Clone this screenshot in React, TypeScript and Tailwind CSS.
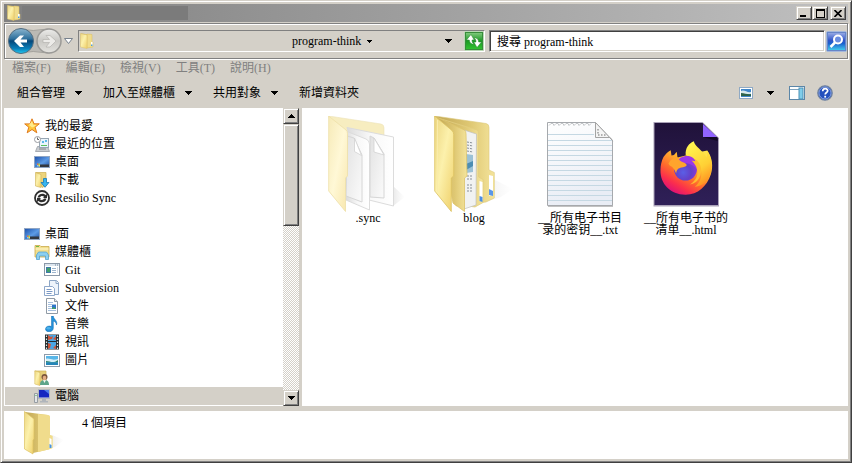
import type { ReactNode } from "react";

const raised =
  "border border-t-[#d4d0c8] border-l-[#d4d0c8] border-r-[#404040] border-b-[#404040] shadow-[inset_1px_1px_0_#fff,inset_-1px_-1px_0_#808080]";

function Gradients() {
  return (
    <svg width="0" height="0" className="absolute" aria-hidden="true">
      <defs>
        <linearGradient id="flap" x1="0" y1="0" x2="1" y2="1">
          <stop offset="0" stopColor="#ecd680" />
          <stop offset=".45" stopColor="#fcf1ac" />
          <stop offset="1" stopColor="#efcf68" />
        </linearGradient>
        <linearGradient id="back" x1="0" y1="0" x2="1" y2="0">
          <stop offset="0" stopColor="#c0a654" />
          <stop offset=".6" stopColor="#dfc873" />
          <stop offset="1" stopColor="#f4e49c" />
        </linearGradient>
        <linearGradient id="flapPale" x1="0" y1="0" x2="1" y2="1">
          <stop offset="0" stopColor="#f6eab8" />
          <stop offset=".5" stopColor="#fff8d6" />
          <stop offset="1" stopColor="#f8e6ab" />
        </linearGradient>
        <linearGradient id="sheet" x1="0" y1="0" x2="1" y2="0">
          <stop offset="0" stopColor="#dcdcdc" />
          <stop offset=".5" stopColor="#f8f8f8" />
          <stop offset="1" stopColor="#ffffff" />
        </linearGradient>
        <linearGradient id="innerSheet" x1="0" y1="0" x2="1" y2="1">
          <stop offset="0" stopColor="#e2e2e2" />
          <stop offset="1" stopColor="#fbfbfb" />
        </linearGradient>
        <linearGradient id="shade" x1="0" y1="0" x2="1" y2="0">
          <stop offset="0" stopColor="#888" stopOpacity=".45" />
          <stop offset="1" stopColor="#aaa" stopOpacity="0" />
        </linearGradient>
        <linearGradient id="sky" x1="0" y1="0" x2="1" y2="1">
          <stop offset="0" stopColor="#1b4ea8" />
          <stop offset=".55" stopColor="#5d9be6" />
          <stop offset="1" stopColor="#1d4b9a" />
        </linearGradient>
        <linearGradient id="orb" x1="0" y1="0" x2="0" y2="1">
          <stop offset="0" stopColor="#8ab5cf" />
          <stop offset=".42" stopColor="#2d6f9c" />
          <stop offset=".5" stopColor="#06477a" />
          <stop offset=".8" stopColor="#0a7fb9" />
          <stop offset="1" stopColor="#20c8f0" />
        </linearGradient>
        <linearGradient id="greyOrb" x1="0" y1="0" x2="0" y2="1">
          <stop offset="0" stopColor="#ececea" />
          <stop offset=".5" stopColor="#c9c8c4" />
          <stop offset="1" stopColor="#e4e3df" />
        </linearGradient>
        <linearGradient id="notepad" x1="0" y1="0" x2=".3" y2="1">
          <stop offset="0" stopColor="#ffffff" />
          <stop offset="1" stopColor="#e9edf5" />
        </linearGradient>
        <linearGradient id="night" x1="0" y1="0" x2="0" y2="1">
          <stop offset="0" stopColor="#20123a" />
          <stop offset="1" stopColor="#2f2058" />
        </linearGradient>
        <linearGradient id="fire" x1=".85" y1=".1" x2=".25" y2=".95">
          <stop offset="0" stopColor="#ffe14a" />
          <stop offset=".3" stopColor="#ffb52e" />
          <stop offset=".6" stopColor="#ff6a2c" />
          <stop offset=".82" stopColor="#fb2f4c" />
          <stop offset="1" stopColor="#e01274" />
        </linearGradient>
        <linearGradient id="tail" x1=".3" y1="0" x2=".7" y2="1">
          <stop offset="0" stopColor="#fff650" />
          <stop offset=".6" stopColor="#ffd035" />
          <stop offset="1" stopColor="#ff8a1f" />
        </linearGradient>
        <radialGradient id="globe" cx=".4" cy=".65" r=".7">
          <stop offset="0" stopColor="#5a5fe6" />
          <stop offset=".5" stopColor="#6440c8" />
          <stop offset="1" stopColor="#9a37dc" />
        </radialGradient>
        <linearGradient id="go" x1="0" y1="0" x2="0" y2="1">
          <stop offset="0" stopColor="#8fd08b" />
          <stop offset=".5" stopColor="#1c9a25" />
          <stop offset="1" stopColor="#35c832" />
        </linearGradient>
        <linearGradient id="find" x1="0" y1="0" x2="0" y2="1">
          <stop offset="0" stopColor="#a9b9ea" />
          <stop offset=".45" stopColor="#2f55c8" />
          <stop offset=".6" stopColor="#1b62cf" />
          <stop offset="1" stopColor="#4be0f2" />
        </linearGradient>
      </defs>
    </svg>
  );
}

function Icon({ size = 16, children }: { size?: number; children: ReactNode }) {
  return (
    <svg width={size} height={size} viewBox={`0 0 ${size} ${size}`} className="shrink-0" aria-hidden="true">
      {children}
    </svg>
  );
}

function FolderIcon() {
  return (
    <Icon>
      <path d="M2 .5L12 1.500v13L7 15z" fill="url(#back)" />
      <path d="M8 1l5 .5v7l1 1v4.500l-6 1z" fill="#f0dc8c" stroke="#d8bd62" strokeWidth=".5" />
      <path d="M1.500 .5L8 2V15.500L1.500 14z" fill="url(#flap)" stroke="#dcc068" strokeWidth=".5" />
      <path d="M12 9h1.500v4H12z" fill="#fff" />
      <path d="M12 11.500h1.500V13H12z" fill="#4a9be0" />
    </Icon>
  );
}

function DesktopIcon() {
  return (
    <Icon>
      <rect x=".5" y="2.500" width="15" height="11" fill="url(#sky)" stroke="#8fa5c4" />
      <path d="M6 10.500h9V13H6z" fill="#33373f" />
      <path d="M1 11h5v2H1z" fill="#3a7fd0" />
      <path d="M3 9.500h1.500V11H3z" fill="#f2693b" />
      <path d="M4.500 9.500H6V11H4.500z" fill="#a5d845" />
      <path d="M3 11h1.500v1.500H3z" fill="#7cc8f5" />
      <path d="M4.500 11H6v1.500H4.500z" fill="#ffdf4d" />
    </Icon>
  );
}

function StarIcon() {
  return (
    <Icon>
      <path d="M8 .8l2 5h5.300l-4.200 3.400 1.700 5.600L8 11.500l-4.800 3.300 1.600-5.600L.7 5.900H6z" fill="#ffc83a" stroke="#e07a1e" strokeLinejoin="round" />
      <path d="M8 3l1.200 3.800 3.300.2L9.600 9 8 9.600 5 7z" fill="#ffeb8c" />
    </Icon>
  );
}

function RecentIcon() {
  return (
    <Icon>
      <path d="M3.500 10.500h10l2 5h-14z" fill="#c9cdd2" stroke="#989da3" strokeWidth=".8" />
      <rect x="5.500" y="2.500" width="9" height="9" fill="#eaf5fc" stroke="#98a6b3" />
      <path d="M8 5h2v2H8zM11 4h2v2h-2z" fill="#5cb9e8" />
      <path d="M7 9h6v1H7z" fill="#5ac15f" />
      <circle cx="3.500" cy="3.500" r="3" fill="#fff" stroke="#9a9da2" />
      <path d="M3.500 1.500v2h1.500" fill="none" stroke="#666" />
      <path d="M5 13h7" stroke="#888" />
    </Icon>
  );
}

function DownloadIcon() {
  return (
    <Icon>
      <path d="M2 .5h10v13l-4 2z" fill="#edd47c" stroke="#cdaf51" strokeWidth=".7" />
      <path d="M1.500 .5L7 2.500V15.500L1.500 14z" fill="url(#flap)" stroke="#cfb257" strokeWidth=".6" />
      <path d="M9.500 6.500h3v4h2.500l-4 4.800-4-4.800h2.500z" fill="#36b5f0" stroke="#1678b8" strokeWidth=".8" />
    </Icon>
  );
}

function SyncIcon() {
  return (
    <Icon>
      <circle cx="8" cy="8" r="7" fill="#fff" stroke="#2e2e2e" strokeWidth="1.800" />
      <path d="M3.500 7.500C4 3.500 9.500 2.500 11.500 5L13 4v4H9l1.200-1.300C8.500 5.500 6.500 6 6 7.500zM12.500 8.500C12 12.500 6.500 13.500 4.500 11L3 12V8h4L5.800 9.300C7.500 10.500 9.500 10 10 8.500z" fill="#2e2e2e" />
    </Icon>
  );
}

function LibraryIcon() {
  return (
    <Icon>
      <path d="M1 3V1.500h5l1 1h8V13H1z" fill="#f3df8d" stroke="#c9a94b" strokeWidth=".8" />
      <path d="M2 2h3v1H2z" fill="#6dbb45" />
      <path d="M1.500 5h13" stroke="#fff8d2" />
      <path d="M2.500 15.500V11l2-3h8l2 3v4.500h-3V12h-6v3.500z" fill="#8bcff0" stroke="#57a3cf" strokeWidth=".8" />
    </Icon>
  );
}

function GitIcon() {
  return (
    <Icon>
      <rect x=".5" y="1.500" width="15" height="12" fill="#fff" stroke="#8b98a8" />
      <path d="M1 2h14v2H1z" fill="#dce5ee" />
      <path d="M11 2.500h1v1h-1zM13 2.500h1v1h-1z" fill="#6f8498" />
      <rect x="2" y="5" width="5" height="6" fill="#3f7aa8" />
      <path d="M3 6h3v4H3z" fill="#41a06a" />
      <path d="M8 6.500h4M8 8.500h4M8 10.500h4" stroke="#9eb5ce" />
      <path d="M13 5h1v6h-1z" fill="#d3dbe5" />
    </Icon>
  );
}

function SubversionIcon() {
  return (
    <Icon>
      <path d="M5.500.5h7l2 2v12h-9z" fill="#eef4fb" stroke="#8ca6c6" />
      <path d="M12 1v2.500h2" fill="none" stroke="#8ca6c6" />
      <path d="M.5 6.500h8l2 2v7H.5z" fill="#fff" stroke="#8fa8cb" />
      <path d="M2.500 9.500h5M2.500 11.500h6M2.500 13.500h5" stroke="#7a99c6" />
    </Icon>
  );
}

function DocumentIcon() {
  return (
    <Icon>
      <path d="M2.500.5h8l3 3v12h-11z" fill="#fff" stroke="#909aa5" />
      <path d="M10.500.5v3h3" fill="#e3e8ed" stroke="#909aa5" />
      <path d="M4 4.500h5M4 6.500h8M4 8.500h4M4 10.500h4M4 12.500h8" stroke="#a5bfdd" />
      <path d="M8 7h4v4H8z" fill="#2d73cb" />
      <path d="M8 10l2-1 2 2H8z" fill="#43a163" />
    </Icon>
  );
}

function MusicIcon() {
  return (
    <Icon>
      <path d="M7.500 0h1.800c.2 3.500 4.700 4.500 3.200 9-.3-2.500-1.500-3.500-3.200-3.800V12c0 5-8 4.500-7.800 1 .2-2.800 3.500-3.500 6-2.500z" fill="#2493dc" stroke="#0e69af" strokeWidth=".5" />
      <ellipse cx="4.500" cy="12.300" rx="2" ry="1.200" fill="#4fb2ea" />
    </Icon>
  );
}

function VideoIcon() {
  return (
    <Icon>
      <path d="M1 .5h14v15H1z" fill="#262d30" />
      <path d="M4 1h8v6H4zM4 8h8v7H4z" fill="#4aa6e4" />
      <path d="M4 1l3 2 2-1-1 3-4 1zM12 2v4L9 5zM4 9l3 1-1 4-2 1zM12 11v4l-3-1z" fill="#cf5337" />
      <path d="M2.500 1.500v14M13.500 1.500v14" stroke="#e2e9e7" strokeWidth="1.200" strokeDasharray="1.500 1.500" />
    </Icon>
  );
}

function PictureIcon() {
  return (
    <Icon>
      <rect x=".5" y="2.500" width="15" height="12" fill="#fff" stroke="#8e9cab" />
      <path d="M2 4h12v9H2z" fill="#58b6e8" />
      <path d="M2 7c3-1.500 5 2 12 0v3H2z" fill="#d5eff8" />
      <path d="M2 9c4 0 7 3 12-1v2.500H2z" fill="#2e8069" />
      <path d="M2 10.500h12V13H2z" fill="#2585b8" />
    </Icon>
  );
}

function UserIcon() {
  return (
    <Icon>
      <path d="M1 1h11v13H7z" fill="#e6ce7a" stroke="#cfb257" strokeWidth=".7" />
      <path d="M.8 .8L6 2.500V15.500L.8 14z" fill="url(#flap)" stroke="#d5b95e" strokeWidth=".6" />
      <path d="M6 15c0-4 2-5 4.500-5s4.500 1 4.500 5z" fill="#5da58a" />
      <path d="M9 10h3l-1.500 3z" fill="#f4f5f0" />
      <circle cx="10.500" cy="7" r="3" fill="#7b553c" />
      <ellipse cx="10.500" cy="8" rx="1.800" ry="2.200" fill="#e2ad83" />
    </Icon>
  );
}

function ComputerIcon() {
  return (
    <Icon>
      <rect x="4.500" y="1.500" width="11" height="9" fill="#dde1e5" stroke="#b3b8be" />
      <path d="M5 2h10v7.500H5z" fill="#1627c0" />
      <path d="M10 2h5v4z" fill="#4f7be8" />
      <path d="M8 11h4v2h2v1.500H6V13h2z" fill="#b0b5bb" />
      <path d="M.5 5.500h3v9h-3z" fill="#e2e5e8" stroke="#979da3" />
      <path d="M1.500 7h1v1h-1z" fill="#37b54c" />
    </Icon>
  );
}

const tree: { label: string; icon: () => ReactNode; pad: string; selected?: boolean; gap?: boolean }[] = [
  { label: "我的最愛", icon: StarIcon, pad: "pl-[19px]" },
  { label: "最近的位置", icon: RecentIcon, pad: "pl-[29px]" },
  { label: "桌面", icon: DesktopIcon, pad: "pl-[29px]" },
  { label: "下載", icon: DownloadIcon, pad: "pl-[29px]" },
  { label: "Resilio Sync", icon: SyncIcon, pad: "pl-[29px]" },
  { label: "桌面", icon: DesktopIcon, pad: "pl-[19px]", gap: true },
  { label: "媒體櫃", icon: LibraryIcon, pad: "pl-[29px]" },
  { label: "Git", icon: GitIcon, pad: "pl-[39px]" },
  { label: "Subversion", icon: SubversionIcon, pad: "pl-[39px]" },
  { label: "文件", icon: DocumentIcon, pad: "pl-[39px]" },
  { label: "音樂", icon: MusicIcon, pad: "pl-[39px]" },
  { label: "視訊", icon: VideoIcon, pad: "pl-[39px]" },
  { label: "圖片", icon: PictureIcon, pad: "pl-[39px]" },
  { label: "", icon: UserIcon, pad: "pl-[29px]" },
  { label: "電腦", icon: ComputerIcon, pad: "pl-[29px]", selected: true },
];

function SyncFolder() {
  return (
    <Icon size={96}>
      <path d="M73 70l12 11-12 9z" fill="url(#shade)" opacity=".4" />
      <path d="M8.700 0L61 8q3 .5 3 4v60L27 80z" fill="#f7edc0" stroke="#ece2b8" strokeWidth=".6" />
      <path d="M27 11.500L73.500 21v69L49 84z" fill="url(#sheet)" stroke="#dcdcdc" />
      <path d="M50 20l4 2 10 16v44l-14-1z" fill="url(#innerSheet)" stroke="#d6d6d6" />
      <path d="M54 22v14l10 3z" fill="#fff" stroke="#d2d2d2" strokeWidth=".8" />
      <path d="M27 15.500L46 23q3.500 1.500 3.500 5v66L26 84z" fill="url(#sheet)" stroke="#dcdcdc" />
      <path d="M27 20l7 2 8 17v47l-16-6z" fill="url(#innerSheet)" stroke="#d6d6d6" />
      <path d="M34.500 22v13.500l7 4z" fill="#fff" stroke="#d2d2d2" strokeWidth=".8" />
      <path d="M8.700 0L26 14q1.500 1 1.500 3.500V60l-2 2v33.500L8.700 75z" fill="url(#flapPale)" stroke="#eee0a8" strokeWidth=".8" />
    </Icon>
  );
}

function BlogFolder() {
  return (
    <Icon size={96}>
      <path d="M67 63l20 10-12 8-16 5z" fill="url(#shade)" opacity=".3" />
      <path d="M8.700 0L60 7.500q3 .5 3 4V54l5.300 2.500V82L60 86 30 90z" fill="url(#back)" stroke="#dcc878" strokeWidth=".6" />
      <path d="M63 59l4 1v19l-4 1z" fill="#fff" />
      <path d="M63 73l4 2v5l-4-1z" fill="#5a97e8" />
      <path d="M12 2L51 14q1.500 1 1.500 4v43l4.500 2.500v23L49 91 28 88z" fill="url(#back)" stroke="#e2ce80" strokeWidth=".8" />
      <path d="M53.500 65l3 1v18l-3 1z" fill="#fff" />
      <path d="M53.500 80l3 1v5l-3-1z" fill="#4b8de3" />
      <path d="M38 14l12.500 4L50 89l-12 4z" fill="#f1f2f2" stroke="#bfc0c0" strokeWidth=".7" />
      <path d="M41 26l6 1M41 29l6 1M41 32l6 1M41 35l6 1M41 60h6M41 63h6M41 69h6M41 72h6M41 75h6" stroke="#888f96" strokeDasharray="2 1" />
      <path d="M40 38l7 1v17l-7 1z" fill="#9bc1d6" />
      <path d="M40 48l7-3v5l-7 4z" fill="#4c8db3" />
      <path d="M10 1L38.500 14q1.500 1 1.500 4l1 42-2.500 2v33.500L27 87z" fill="url(#back)" stroke="#ddc46b" strokeWidth=".8" />
      <path d="M8.700 0L26 14.500q1.700 1.500 1.700 4V60l-2.400 2v33.500L8.700 75z" fill="url(#flap)" stroke="#dcc262" strokeWidth=".8" />
      <path d="M11.500 4v72" stroke="#f9ebaa" />
    </Icon>
  );
}

function TextFile() {
  return (
    <Icon size={96}>
      <path d="M16 7h48.500L81 25.500V91H16z" fill="#999" opacity=".6" />
      <path d="M15.500 6.500h48L80.500 24.500v65h-65z" fill="url(#notepad)" stroke="#a6a9ad" />
      <path d="M17 9.500l2-2h2l1 2 2-2h2l1 2 2-2h2l1 2 2-2h2l1 2 2-2h2l1 2 2-2h2l1 2 2-2h2l1 2 2-2h2l1 2 2-2" fill="none" stroke="#c2c5c8" />
      <path d="M16 18.500h46M16 24.500h64M16 29.500h64M16 34.500h64M16 39.500h64M16 44.500h64M16 49.500h64M16 54.500h64M16 59.500h64M16 64.500h64M16 69.500h64M16 74.500h64M16 79.500h64M16 84.500h64" stroke="#c5d8e3" />
      <path d="M63.500 6.500v15h14.500l2.500 3z" fill="#f4f4f4" stroke="#a3a3a3" />
      <path d="M66 13v6h8" fill="none" stroke="#999" strokeWidth="1.500" strokeDasharray="1.500 1.500" />
    </Icon>
  );
}

function FirefoxFile() {
  return (
    <Icon size={96}>
      <path d="M15.500 6h49L81 22v68.500H15.500z" fill="#aaa2b8" />
      <path d="M16.500 7h48L80 22.500V89H16.500z" fill="url(#night)" />
      <path d="M65 8v13h14z" fill="#9164ff" />
      <path d="M65 21h14.500v4z" fill="#120a25" />
      <path d="M25.500 41c2-3 4.500-5 7.200-6.700l.8 5.200 2.500-.5 2.700-3.200.8 5.700 20-5 9.800-2c5 7 6.200 16 3.500 24-4 12-13 20-25 20.200C33 79 22 68 22.500 54c0-5 1-9 3-13z" fill="url(#fire)" />
      <path d="M56 25.300c0 3 4 6 8 10.200 2 2 3.500 4 4.500 6 .8-2 1-4 .8-6.800 5 8 6 17 2 26-3.500 7-9 9.500-14.500 10 5-4 7-9 6.500-15-.5-7-6-14-15.600-16.400C47 32 51 27 56 25.300z" fill="url(#tail)" />
      <circle cx="47.500" cy="53" r="11.500" fill="url(#globe)" />
      <path d="M38.500 46.500c2.500-5 7-7 12-6.500 4 .5 6 3 7.500 5.500l-4-1c4 4 5 7 5 9-4-6-10-7-20.500-7z" fill="#9c37e8" />
      <path d="M57 43c7 4 8.500 15 2 22-2 2-4.500 3-7 3.500 6-4 8.500-9 7-15-1-4-2.500-6-5.500-9l4 1z" fill="#ffbd30" />
      <path d="M30.500 47.500c2-4 5-6 9-6.200 1.500 2.800 3 4.200 5.500 5 2 .8 3.500 1.400 3.700 3-.8 1.700-3 1.700-5.200 2.200-3 .6-5 2-5.300 6-1.200-2.500-2-4.500-4-6.500-1.500-1-3-1.500-3.700-3.500z" fill="#ffa42c" />
    </Icon>
  );
}

const files: { name: string; icon: () => ReactNode }[] = [
  { name: ".sync", icon: SyncFolder },
  { name: "blog", icon: BlogFolder },
  { name: "__所有电子书目\n录的密钥__.txt", icon: TextFile },
  { name: "__所有电子书的\n清单__.html", icon: FirefoxFile },
];

function Caret({ small = false, up = false }: { small?: boolean; up?: boolean }) {
  return (
    <svg width={small ? 5 : 7} height={small ? 3 : 4} viewBox={small ? "1 1 5 3" : "0 0 7 4"} className={up ? "rotate-180" : ""} aria-hidden="true" shapeRendering="crispEdges">
      <path d="M0 0h7v1H6v1H5v1H4v1H3V3H2V2H1V1H0z" />
    </svg>
  );
}

function ToolButton({ label, menu = false }: { label: string; menu?: boolean }) {
  return (
    <button className="flex items-center gap-[10px] leading-4">
      {label}
      {menu && <Caret />}
    </button>
  );
}

export default function App() {
  return (
    <div className="flex h-screen w-full flex-col overflow-hidden border-t border-r border-b border-l border-t-[#d4d0c8] border-r-[#404040] border-b-[#404040] border-l-[#d4d0c8] bg-[#d4d0c8] p-[3px] text-xs text-black shadow-[inset_1px_1px_0_#fff,inset_-1px_-1px_0_#808080] [font-family:'Liberation_Serif','Noto_Sans_CJK_TC',serif]">
      <Gradients />
      <header className="flex h-[18px] shrink-0 items-center bg-linear-to-r from-[#808080] to-[#c0c0c0] pr-[2px] pl-[2px]">
        <FolderIcon />
        <div className="h-[14px] w-[166px] bg-[#7b7b7b]" />
        <div className="ml-auto flex">
          <button aria-label="Minimize" className={`flex h-[14px] w-4 justify-center bg-[#d4d0c8] ${raised}`}>
            <span className="mt-2 mr-[2px] h-[2px] w-[6px] bg-black" />
          </button>
          <button aria-label="Maximize" className={`flex h-[14px] w-4 items-center justify-center bg-[#d4d0c8] ${raised}`}>
            <span className="h-[9px] w-[9px] border border-t-2 border-black" />
          </button>
          <button aria-label="Close" className={`ml-[2px] flex h-[14px] w-4 items-center justify-center bg-[#d4d0c8] ${raised}`}>
            <svg width="8" height="7" viewBox="0 0 8 7" aria-hidden="true">
              <path d="M.5 0l7 7M7.500 0l-7 7" stroke="#000" strokeWidth="1.600" />
            </svg>
          </button>
        </div>
      </header>

      <div className="mt-px flex h-9 shrink-0 items-center border border-[#808080] pl-[2px] shadow-[1px_1px_0_#fff,inset_1px_1px_0_#fff]">
        <svg width="68" height="28" viewBox="0 0 68 28" className="shrink-0" aria-hidden="true">
          <path d="M12 2q14 3 29 0a12 12 0 0 1 0 24q-15-3-29 0z" fill="#bbb9b4" stroke="#a3a19c" />
          <circle cx="14" cy="14" r="12.500" fill="url(#orb)" stroke="#536d80" />
          <path d="M20 12.500h-6.500l3.500-4h-4L7 14l6 6h4l-3.500-4.500H20z" fill="#fff" />
          <circle cx="42" cy="14" r="12" fill="url(#greyOrb)" stroke="#9b9a97" strokeWidth="1.500" />
          <path d="M36 12.500h6.500l-3.500-4h4L49 14l-6 6h-4l3.500-4.500H36z" fill="#ecebe8" stroke="#b4b3b0" strokeWidth=".7" />
          <path d="M57.500 11.500h8l-4 5z" fill="#fff" stroke="#77818d" />
        </svg>
        <div className="ml-[3px] flex h-[22px] min-w-0 flex-[405] items-center border border-t-[#808080] border-r-white border-b-white border-l-[#808080]">
          <FolderIcon />
          <button className="ml-[197px] flex items-center gap-[6px] whitespace-nowrap">
            program-think
            <Caret small />
          </button>
          <button aria-label="Address history" className="ml-auto p-1">
            <Caret />
          </button>
          <button aria-label="Refresh" className="ml-2 h-5 w-5">
            <svg width="20" height="20" viewBox="0 0 20 20" aria-hidden="true">
              <rect x=".5" y=".5" width="19" height="19" rx="1.500" fill="url(#go)" stroke="#b9d9b5" />
              <rect x="1.500" y="1.500" width="17" height="17" fill="none" stroke="#388c3b" />
              <path d="M7 3.500L2.500 9h2.800c.2 3 2 4.200 4.700 4.200C8.500 12 8 11 8 9h2.200zM13 16.500L17.500 11h-2.800c-.2-3-2-4.200-4.700-4.200 1.500 1.200 2 2.200 2 4.200H9.800z" fill="#fff" stroke="#27822c" strokeWidth=".5" />
            </svg>
          </button>
        </div>
        <input
          aria-label="搜尋"
          defaultValue="搜尋 program-think"
          className="ml-1 h-[22px] min-w-0 flex-[320] border border-t-[#808080] border-r-white border-b-white border-l-[#808080] bg-white px-[7px] text-xs shadow-[inset_1px_1px_0_#404040,inset_-1px_-1px_0_#d4d0c8] outline-none"
        />
        <button aria-label="Search" className="ml-px h-[21px] w-[21px] shrink-0">
          <svg width="21" height="21" viewBox="0 0 21 21" aria-hidden="true">
            <rect x=".5" y=".5" width="20" height="20" rx="1.500" fill="url(#find)" stroke="#a5b8dc" />
            <rect x="1.500" y="1.500" width="18" height="18" fill="none" stroke="#6685c8" />
            <circle cx="12" cy="8.500" r="4" fill="#6a8de0" stroke="#fff" strokeWidth="2" />
            <path d="M9 11.500L4.500 16" stroke="#fff" strokeWidth="2.500" />
          </svg>
        </button>
      </div>

      <nav className="flex h-[18px] shrink-0 items-center gap-[15px] pl-2 text-[#808080]">
        <button>檔案(F)</button>
        <button>編輯(E)</button>
        <button>檢視(V)</button>
        <button>工具(T)</button>
        <button>說明(H)</button>
      </nav>

      <div className="flex h-[31px] shrink-0 items-center pl-[13px]">
        <div className="flex items-center gap-[21px]">
          <ToolButton label="組合管理" menu />
          <ToolButton label="加入至媒體櫃" menu />
          <ToolButton label="共用對象" menu />
          <ToolButton label="新增資料夾" />
        </div>
        <div className="ml-auto flex items-center pr-[15px]">
          <button aria-label="Change view" className="h-4">
            <svg width="14" height="16" viewBox="0 0 14 16" aria-hidden="true">
              <rect x=".5" y="2.500" width="13" height="11" fill="#fff" stroke="#8fa9c4" />
              <path d="M2 4h10v8H2z" fill="#3f86c9" />
              <path d="M2 6c3-2 6 2 10 1v2H2z" fill="#d6e9ed" />
              <path d="M2 8c4 0 7 2 10 1v2H2z" fill="#2d6248" />
            </svg>
          </button>
          <button aria-label="More views" className="ml-[14px]">
            <Caret />
          </button>
          <button aria-label="Preview pane" className="ml-[15px] h-4">
            <Icon>
              <rect x=".5" y="1.500" width="15" height="13" fill="#fff" stroke="#5b86a8" />
              <path d="M1 4.500h9" stroke="#7fa3bf" />
              <rect x="10" y="3" width="4" height="11" fill="#7fcdea" stroke="#4e91b5" />
            </Icon>
          </button>
          <button aria-label="Help" className="ml-3 h-4">
            <Icon>
              <circle cx="8" cy="8" r="7.200" fill="#2450bd" stroke="#71839f" strokeWidth="1.300" />
              <circle cx="8" cy="8" r="6" fill="none" stroke="#a9bfee" strokeWidth=".7" />
              <path d="M5.700 6.300c0-3.500 5-3.300 5-.5 0 1.800-2.500 1.700-2.500 3.700" fill="none" stroke="#fff" strokeWidth="1.700" />
              <path d="M7.300 10.800h1.800v1.800H7.300z" fill="#fff" />
            </Icon>
          </button>
        </div>
      </div>

      <div className="flex min-h-0 flex-1">
        <aside className="flex w-[295px] shrink-0 bg-white">
          <ul className="min-w-0 flex-1 overflow-hidden pt-[9px] pl-px">
            {tree.map(({ label, icon: Glyph, pad, selected, gap }, i) => (
              <li key={i} className={gap ? "mt-[18px]" : ""}>
                <button
                  aria-label={label || "User folder"}
                  className={`flex h-[18px] w-full items-center gap-[5px] whitespace-nowrap ${pad} ${selected ? "bg-[#d4d0c8]" : ""}`}
                >
                  <Glyph />
                  {label}
                </button>
              </li>
            ))}
          </ul>
          <div className="flex w-4 shrink-0 flex-col bg-[repeating-conic-gradient(#fff_0_25%,#d4d0c8_0_50%)] bg-size-[2px_2px]">
            <button aria-label="Scroll up" className={`flex h-4 shrink-0 items-center justify-center bg-[#d4d0c8] ${raised}`}>
              <Caret up />
            </button>
            <div className={`h-[102px] bg-[#d4d0c8] ${raised}`} />
            <button aria-label="Scroll down" className={`mt-auto flex h-4 shrink-0 items-center justify-center bg-[#d4d0c8] ${raised}`}>
              <Caret />
            </button>
          </div>
        </aside>
        <main className="ml-[3px] flex min-w-0 flex-1 flex-wrap content-start bg-white pt-2 pl-[13px]">
          {files.map(({ name, icon: Glyph }) => (
            <button key={name} className="flex w-[106px] flex-col items-center leading-3">
              <Glyph />
              <span className="whitespace-pre [font-family:'Liberation_Serif','Noto_Sans_CJK_SC',serif]">{name}</span>
            </button>
          ))}
        </main>
      </div>

      <footer className="mt-[5px] flex h-12 shrink-0 items-start bg-white pl-4">
        <svg width="48" height="48" viewBox="0 0 48 48" aria-hidden="true">
          <path d="M32 24l12 5-9 7-9 2z" fill="url(#shade)" opacity=".5" />
          <path d="M5 1l23 3q2 .5 2 2v18l2.500 1v12l-4 1.500L13 42z" fill="url(#back)" />
          <path d="M18 3l10 1q2 .5 2 2v18l2.500 1v12l-4 1.500L18 41z" fill="#f0dc8c" />
          <path d="M29.500 27l2 1v9h-2z" fill="#fff" />
          <path d="M29.500 33l2 1v3h-2z" fill="#4b94de" />
          <path d="M4.500 .5L14 8v20l-1 1v14L4.500 38z" fill="url(#flap)" stroke="#dcc262" strokeWidth=".7" />
        </svg>
        <p className="ml-[14px] pt-1 leading-4">4 個項目</p>
      </footer>
    </div>
  );
}
